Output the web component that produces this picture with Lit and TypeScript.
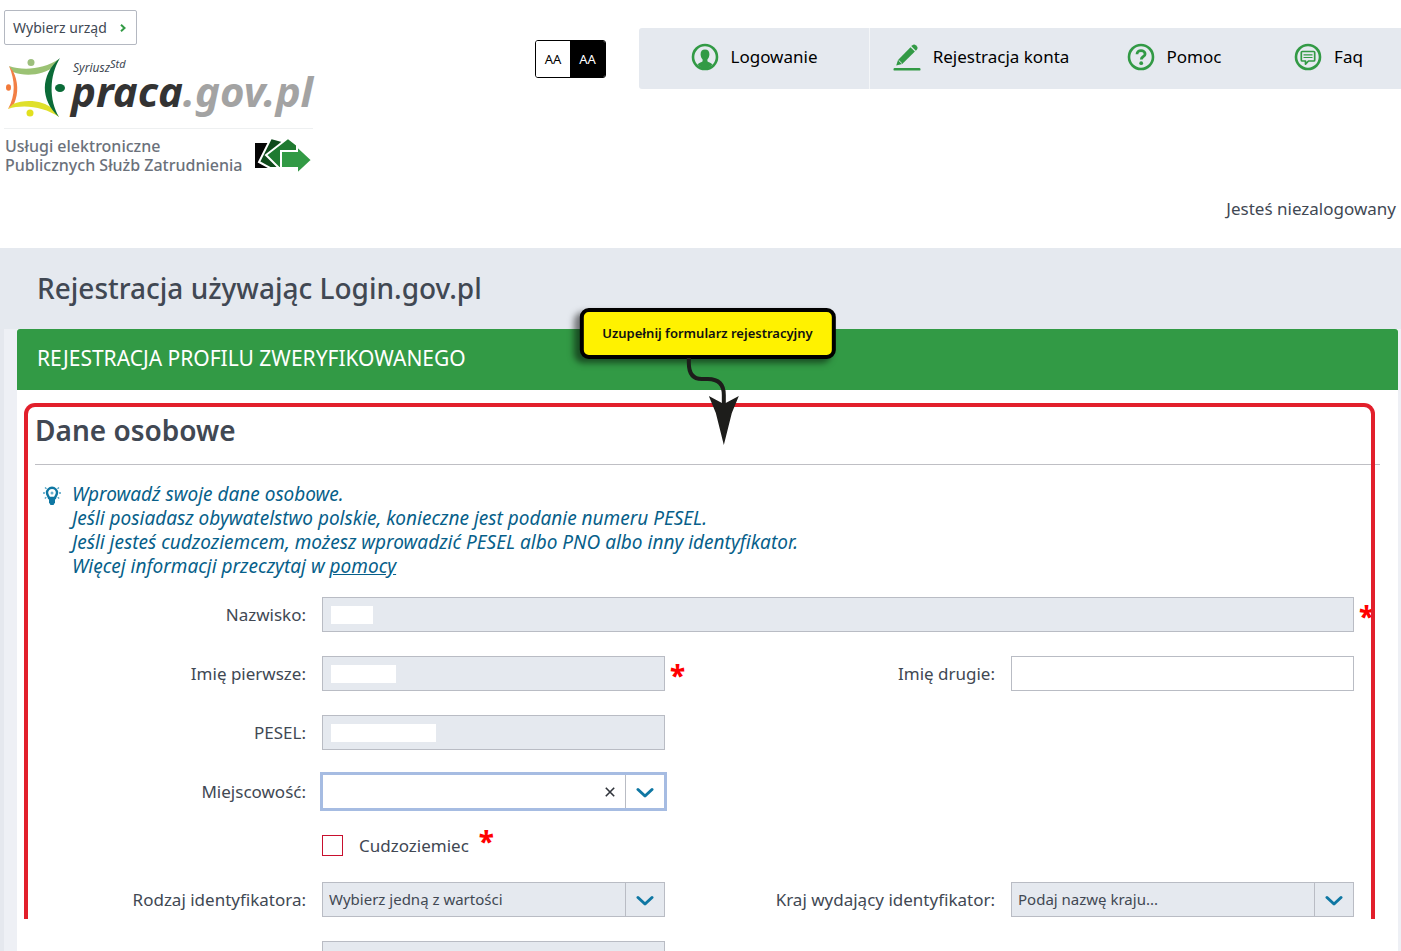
import { LitElement, html, css, svg, nothing } from "lit";
import { customElement } from "lit/decorators.js";

const chevron = html`<svg class="chevron" viewBox="0 0 18 12" width="18" height="12" aria-hidden="true">
  <path d="M2 2.5 L9 9 L16 2.5" fill="none" stroke="#0f77a3" stroke-width="3" stroke-linecap="round" stroke-linejoin="round" />
</svg>`;

const navIcons = {
  user: svg`<circle cx="14" cy="14" r="12" fill="none" stroke="#329a45" stroke-width="2.6"/>
    <path d="M14 6.6c3 0 4.6 2 4.4 4.9-.1 2.2-1 3.9-2 5v1.8c1 1.200 3.300 1.300 4.900 2.900A12 12 0 0 1 14 26a12 12 0 0 1-7.300-4.800c1.600-1.600 3.900-1.700 4.900-2.900v-1.800c-1-1.100-1.900-2.800-2-5C9.400 8.600 11 6.600 14 6.600z" fill="#329a45"/>`,
  pen: svg`<rect x="0.500" y="25" width="27" height="2.600" rx="1.200" fill="#329a45"/>
    <path d="M3.200 22.500l1.800-5.600L17.500 4.200l4.400 4.300L9.200 20.900z" fill="#329a45"/>
    <path d="M18.400 3.300l1-1c1-1 2.400-1 3.400 0l1 1c1 1 1 2.400 0 3.400l-1 1z" fill="#329a45"/>
    <path d="M5.600 17.300l3.300 3.200" stroke="#e5e9ef" stroke-width="1"/>`,
  help: svg`<circle cx="14" cy="14" r="12" fill="none" stroke="#329a45" stroke-width="2.600"/>
    <path d="M10 11.200c0-2.300 1.700-3.600 4-3.600s4.100 1.300 4.100 3.300c0 2.700-3.800 2.900-3.800 5.500" fill="none" stroke="#329a45" stroke-width="2.800"/>
    <circle cx="14.200" cy="20.200" r="1.900" fill="#329a45"/>`,
  faq: svg`<circle cx="14" cy="14" r="12" fill="none" stroke="#329a45" stroke-width="2.600"/>
    <path d="M8.300 8.500h11.400c.7 0 1 .4 1 1v7.500c0 .7-.4 1-1 1h-5.200l-3 3.200v-3.200H8.300c-.7 0-1-.4-1-1V9.500c0-.6.300-1 1-1z" fill="none" stroke="#329a45" stroke-width="1.700" stroke-linejoin="round"/>
    <path d="M9.500 11.800h9M9.500 14.500h9" stroke="#329a45" stroke-width="1.200"/>`,
};

const navItems = [
  { label: "Logowanie", icon: navIcons.user },
  { label: "Rejestracja konta", icon: navIcons.pen },
  { label: "Pomoc", icon: navIcons.help },
  { label: "Faq", icon: navIcons.faq },
];

@customElement("app-root")
export class AppRoot extends LitElement {
  static styles = css`
    :host {
      display: block;
      height: 100vh;
      overflow: hidden;
      background: #fff;
      color: #414853;
      font-family: "Noto Sans", "Open Sans", sans-serif;
      font-size: 17px;
      line-height: 24px;
    }
    * { box-sizing: border-box; }
    h1, h2, h3, p { margin: 0; }
    button, input, select { font: inherit; color: inherit; }
    svg { display: block; flex: none; }

    .header {
      display: grid;
      grid-template-columns: auto 1fr;
      height: 248px;
      padding: 10px 0 0 4px;
    }
    .brand { display: flex; flex-direction: column; align-items: flex-start; }
    .office {
      display: flex;
      align-items: center;
      gap: 13px;
      height: 35px;
      padding: 0 10px 0 8px;
      background: #fff;
      border: 1px solid #b4b8c1;
      border-radius: 2px;
      font-size: 14px;
    }
    .logo { display: flex; margin-top: 12px; height: 66px; padding-left: 2px; }
    .words { position: relative; padding: 3px 0 0 5px; }
    .system {
      position: absolute;
      left: 7px;
      top: 3px;
      font-size: 12px;
      line-height: 16px;
      font-style: italic;
      white-space: nowrap;
    }
    .system sup { font-size: 11px; line-height: 8px; vertical-align: 4px; }
    .name {
      font-size: 42px;
      line-height: 62px;
      font-weight: 700;
      font-style: italic;
      color: #333;
    }
    .domain { color: #a3a3a3; }
    .tagline {
      display: flex;
      gap: 12px;
      align-items: center;
      margin-top: 5px;
      padding: 8px 0 0 1px;
      border-top: 1px solid #eef0f1;
    }
    .tagline p { font-size: 16px; line-height: 19px; font-weight: 500; color: #6b717b; white-space: nowrap; }

    .tools { display: flex; flex-direction: column; align-items: flex-end; padding-top: 18px; min-width: 0; }
    .toprow { display: flex; align-items: center; justify-content: flex-end; gap: 33px; width: 100%; }
    .contrast { display: flex; border: 1px solid #000; border-radius: 3px; overflow: hidden; }
    .contrast button {
      width: 34px;
      height: 36px;
      padding: 0;
      border: 0;
      background: #fff;
      color: #000;
      font-size: 13px;
    }
    .contrast .dark { width: 35px; background: #000; color: #fff; }
    .nav {
      display: grid;
      grid-template-columns: 231fr 222fr 164fr 145fr;
      flex: 0 1 762px;
      height: 61px;
      background: #e5e9ef;
      border-radius: 3px 0 0 3px;
    }
    .nav a {
      display: flex;
      align-items: center;
      justify-content: center;
      gap: 12px;
      padding-bottom: 3px;
      color: #000;
      text-decoration: none;
      white-space: nowrap;
    }
    .nav a:first-child { border-right: 1px solid #f4f6f8; }
    .status { margin: 108px 5px 0 0; }

    .titlebar { background: #e5e9ef; padding: 20px 37px 21px; }
    .titlebar h1 { font-size: 28px; line-height: 40px; font-weight: 550; }

    .body { background: #eef0f5; border-left: 4px solid #e5e8ee; padding: 0 3px 0 13px; }
    .panel { position: relative; background: #fff; min-height: 622px; }
    .panel > h2 {
      height: 61px;
      padding: 0 20px;
      background: #329a45;
      border-radius: 3px 3px 0 0;
      color: #fff;
      font-size: 21px;
      line-height: 58px;
      font-weight: 400;
    }
    .section {
      position: relative;
      margin: 13px 23px 0 7px;
      padding: 7px 21px 2px 11px;
    }
    .section::after {
      content: "";
      position: absolute;
      inset: 0;
      border: 4px solid #e21f2b;
      border-bottom: 0;
      border-radius: 11px 11px 0 0;
      pointer-events: none;
    }
    .section h3 {
      margin-right: -26px;
      padding-bottom: 14px;
      border-bottom: 1px solid #bfbfc4;
      font-size: 28px;
      line-height: 40px;
      font-weight: 600;
    }
    .hint {
      display: flex;
      gap: 11px;
      align-items: flex-start;
      padding: 17px 0 19px 8px;
      color: #075f8a;
      font-size: 19px;
      font-style: italic;
    }
    .hint svg { margin-top: 4px; }
    .hint a { color: inherit; }

    .grid {
      display: grid;
      grid-template-columns: 271fr 343fr 314fr 343fr;
      gap: 24px 16px;
      align-items: center;
    }
    .grid > label { text-align: right; white-space: nowrap; }
    .after { padding: 22px 44px 0 18px; }
    .wide { grid-column: span 3; }
    .start { grid-column-start: 1; }
    .box { position: relative; height: 35px; }
    .box > input, .box > select {
      display: block;
      width: 100%;
      height: 100%;
      padding: 0 44px 2px 6px;
      border: 1px solid #b9bcc4;
      border-radius: 0;
      background: #fff;
      font-size: 15px;
      appearance: none;
      outline: none;
      opacity: 1;
    }
    .box > input:disabled, .box > select:disabled { background: #e5e9ef; color: #414853; }
    .mask { position: absolute; left: 9px; top: 9px; height: 18px; background: #fff; }
    .star {
      position: absolute;
      left: calc(100% + 5px);
      top: 2px;
      color: #f00;
      font-size: 28px;
      line-height: 35px;
      font-weight: 800;
    }
    .drop {
      position: absolute;
      inset: 1px 1px 1px auto;
      display: flex;
      align-items: center;
      justify-content: center;
      width: 39px;
      padding: 2px 0 0;
      border: 0;
      border-left: 1px solid #b9bcc4;
      background: none;
      pointer-events: none;
    }
    .clear {
      position: absolute;
      inset: 1px 45px 1px auto;
      width: 20px;
      padding: 0;
      border: 0;
      background: none;
      display: grid;
      place-items: center;
    }
    .focus { box-shadow: 0 0 0 2px #a6bce2; }
    .focus > input { border-color: #a6bce2; }
    .check { display: flex; align-items: center; height: 25px; gap: 16px; }
    .check input {
      appearance: none;
      width: 21px;
      height: 21px;
      margin: 0;
      border: 1px solid #c8102e;
      background: #fff;
    }
    .check label { position: relative; }
    .check .star { left: calc(100% + 10px); top: -10px; }

    .callout { position: absolute; left: 50%; top: -21px; transform: translateX(-50%); z-index: 1; }
    .callout p {
      padding: 0 19px;
      border: 4px solid #000;
      border-radius: 9px;
      background: #fff200;
      box-shadow: -5px 4px 6px rgba(0, 0, 0, 0.5);
      color: #111;
      font-size: 13px;
      line-height: 43px;
      font-weight: 600;
      white-space: nowrap;
    }
    .callout svg { position: absolute; left: 103px; top: 50px; }
  `;

  private maskedField(id: string, label: string, mask: number, required: boolean, wide = false) {
    return html`<label class="start" for=${id}>${label}</label>
      <div class="box ${wide ? "wide" : ""}">
        <input id=${id} type="text" disabled />
        <span class="mask" style="width:${mask}px"></span>
        ${required ? html`<span class="star">*</span>` : nothing}
      </div>`;
  }

  private selectField(id: string, label: string, placeholder: string) {
    return html`<label for=${id}>${label}</label>
      <div class="box">
        <select id=${id} disabled><option>${placeholder}</option></select>
        <span class="drop">${chevron}</span>
      </div>`;
  }

  render() {
    return html`
      <header class="header">
        <div class="brand">
          <button class="office" type="button">
            Wybierz urząd
            <svg width="6" height="8" viewBox="0 0 6 8"><path d="M1 0.800 L4.500 4 L1 7.200" fill="none" stroke="#329a45" stroke-width="2"/></svg>
          </button>
          <div class="logo">
            <svg width="60" height="62" viewBox="0 0 60 62" aria-hidden="true">
              <circle cx="25" cy="5.500" r="3.500" fill="#9dbf7d"/>
              <path d="M3 9 C18 14 38 12 53 2 L49 9 C38 18 20 20 7 15 Z" fill="#9bc274"/>
              <path d="M3 9 C9 23 10 38 2 52 L8 47 C13 36 12 24 7 14 Z" fill="#f27f45"/>
              <ellipse cx="2.500" cy="30.500" rx="2.500" ry="3.300" fill="#f2793a"/>
              <path d="M2 52 C18 47 38 50 53 60 L47 52 C37 43 19 42 7 47 Z" fill="#dfe02b"/>
              <circle cx="24" cy="56" r="3.500" fill="#e2e01f"/>
              <path d="M54 1 C34 18 34 43 53 60 C43 43 43 19 54 1 Z" fill="#0b6b38"/>
              <ellipse cx="54" cy="31" rx="5" ry="4" fill="#0b6b38"/>
            </svg>
            <div class="words">
              <span class="system">Syriusz<sup>Std</sup></span>
              <div class="name">praca<span class="domain">.gov.pl</span></div>
            </div>
          </div>
          <div class="tagline">
            <p>Usługi elektroniczne<br />Publicznych Służb Zatrudnienia</p>
            <svg width="58" height="38" viewBox="0 0 58 38" aria-hidden="true">
              <path d="M0 6h18v25H0z" fill="#050505"/>
              <path d="M16 1 L27 4 L26 31 H15 L4 25 Z" fill="#0f4a1b" stroke="#fff" stroke-width="2"/>
              <path d="M33 1 L42 8 V31 H24 L11 18 Z" fill="#1f7a30" stroke="#fff" stroke-width="2"/>
              <path d="M26 14 H42 V9 L57 23 L42 37 V31 H26 Z" fill="#329a45" stroke="#fff" stroke-width="2"/>
            </svg>
          </div>
        </div>
        <div class="tools">
          <div class="toprow">
            <div class="contrast">
              <button type="button">AA</button><button class="dark" type="button">AA</button>
            </div>
            <nav class="nav">
              ${navItems.map((n) => html`<a href="#"><svg width="28" height="28" viewBox="0 0 28 28" aria-hidden="true">${n.icon}</svg>${n.label}</a>`)}
            </nav>
          </div>
          <p class="status">Jesteś niezalogowany</p>
        </div>
      </header>

      <div class="titlebar"><h1>Rejestracja używając Login.gov.pl</h1></div>

      <main class="body">
        <div class="panel">
          <h2>REJESTRACJA PROFILU ZWERYFIKOWANEGO</h2>
          <section class="section">
            <h3>Dane osobowe</h3>
            <div class="hint">
              <svg width="18" height="20" viewBox="0 0 18 20" aria-hidden="true">
                <path d="M9 1.800a5 5 0 0 1 5 5c0 2.300-1.600 3.300-2 5.200H6C5.600 10.100 4 9.100 4 6.800a5 5 0 0 1 5-5z" fill="#fff" stroke="#0f77a3" stroke-width="2.400"/>
                <path d="M6 12h6v4.500L10.500 19h-3L6 16.500z" fill="#0f77a3"/>
                <circle cx="9" cy="7" r="1.500" fill="#6bb0cc"/>
                <path d="M0 7h2M16 7h2M2 1.500l1.500 1.300M16 1.500l-1.500 1.300M1.800 12.500l1.500-1.200M16.200 12.500l-1.500-1.200" stroke="#4fa0c2" stroke-width="1.300"/>
              </svg>
              <p>
                Wprowadź swoje dane osobowe.<br />
                Jeśli posiadasz obywatelstwo polskie, konieczne jest podanie numeru PESEL.<br />
                Jeśli jesteś cudzoziemcem, możesz wprowadzić PESEL albo PNO albo inny identyfikator.<br />
                Więcej informacji przeczytaj w <a href="#">pomocy</a>
              </p>
            </div>
            <div class="grid">
              ${this.maskedField("surname", "Nazwisko:", 42, true, true)}
              ${this.maskedField("first", "Imię pierwsze:", 65, true)}
              <label for="second">Imię drugie:</label>
              <div class="box"><input id="second" type="text" /></div>
              ${this.maskedField("pesel", "PESEL:", 105, false)}
              <label class="start" for="city">Miejscowość:</label>
              <div class="box focus">
                <input id="city" type="text" />
                <button class="clear" type="button" aria-label="Wyczyść">
                  <svg width="10" height="10" viewBox="0 0 10 10"><path d="M0.800 0.800L9.200 9.200M9.200 0.800L0.800 9.200" stroke="#30343b" stroke-width="1.600"/></svg>
                </button>
                <span class="drop">${chevron}</span>
              </div>
              <span class="start"></span>
              <div class="check">
                <input id="foreign" type="checkbox" /><label for="foreign">Cudzoziemiec<span class="star">*</span></label>
              </div>
              <span></span><span></span>
              ${this.selectField("kind", "Rodzaj identyfikatora:", "Wybierz jedną z wartości")}
              ${this.selectField("country", "Kraj wydający identyfikator:", "Podaj nazwę kraju...")}
            </div>
          </section>
          <div class="grid after">
            <span></span>
            <div class="box"><input type="text" aria-label="Identyfikator" disabled /></div>
          </div>
          <div class="callout">
            <p>Uzupełnij formularz rejestracyjny</p>
            <svg width="60" height="90" viewBox="0 0 60 90" aria-hidden="true">
              <path d="M6 0 V5 Q6 21 19 21 H25 Q41 21 41 37 V50" fill="none" stroke="#1d1d1b" stroke-width="4"/>
              <path d="M26 38 L41 46 L56 38 L49 55 L41 87 L33 55 Z" fill="#1d1d1b"/>
            </svg>
          </div>
        </div>
      </main>
    `;
  }
}
